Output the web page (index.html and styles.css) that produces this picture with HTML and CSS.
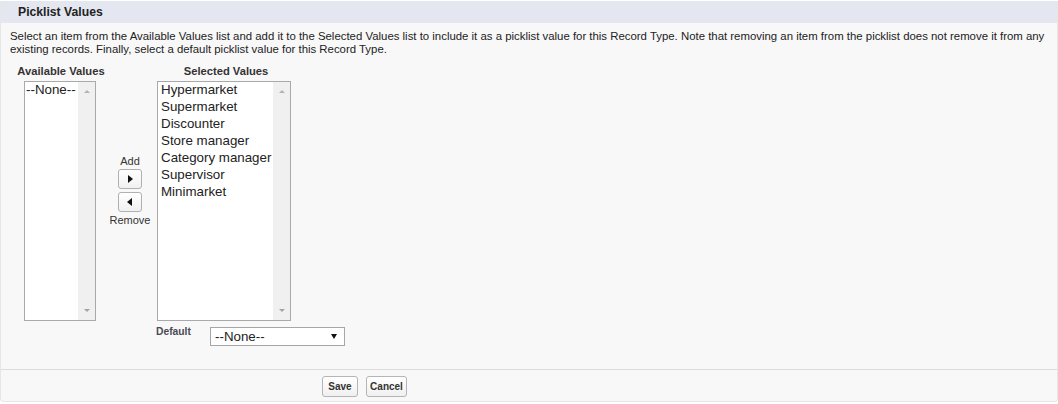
FILE: index.html
```html
<!DOCTYPE html>
<html lang="en">
<head>
<meta charset="utf-8">
<title>Picklist Values</title>
<link rel="stylesheet" href="styles.css">
</head>
<body>
<div class="panel">
  <div class="panel-header"><h3>Picklist Values</h3></div>
  <div class="panel-body">
    <p class="desc">Select an item from the Available Values list and add it to the Selected Values list to include it as a picklist value for this Record Type. Note that removing an item from the picklist does not remove it from any existing records. Finally, select a default picklist value for this Record Type.</p>
    <div class="dueling">
      <div class="col col-avail">
        <div class="col-label">Available Values</div>
        <div class="listbox listbox-avail" role="listbox">
          <div class="list-items">
            <div class="opt">--None--</div>
          </div>
          <div class="scroll"><span class="arr-up"></span><span class="arr-down"></span></div>
        </div>
      </div>
      <div class="col col-btns">
        <div class="col-label">&nbsp;</div>
        <div class="btn-stack">
          <div class="mini-label">Add</div>
          <button class="arrow-btn" type="button" aria-label="Add"><span class="tri-right"></span></button>
          <button class="arrow-btn" type="button" aria-label="Remove"><span class="tri-left"></span></button>
          <div class="mini-label mini-remove">Remove</div>
        </div>
      </div>
      <div class="col col-sel">
        <div class="col-label">Selected Values</div>
        <div class="listbox listbox-sel" role="listbox">
          <div class="list-items">
            <div class="opt">Hypermarket</div>
            <div class="opt">Supermarket</div>
            <div class="opt">Discounter</div>
            <div class="opt">Store manager</div>
            <div class="opt">Category manager</div>
            <div class="opt">Supervisor</div>
            <div class="opt">Minimarket</div>
          </div>
          <div class="scroll"><span class="arr-up"></span><span class="arr-down"></span></div>
        </div>
      </div>
    </div>
    <div class="default-row">
      <span class="default-label">Default</span>
      <div class="fake-select"><span class="sel-text">--None--</span><span class="tri-down"></span></div>
    </div>
  </div>
  <div class="panel-footer">
    <button class="btn btn-save" type="button">Save</button>
    <button class="btn btn-cancel" type="button">Cancel</button>
  </div>
</div>
</body>
</html>
```

FILE: styles.css
```css
html, body {
  margin: 0;
  padding: 0;
  background: #ffffff;
}

body {
  font-family: "Liberation Sans", Arial, sans-serif;
  color: #222;
  padding-top: 1px;
}

.panel {
  background: #f8f8f8;
  border: 1px solid #e6e6e6;
  border-top: none;
  border-radius: 0 0 4px 4px;
  width: 1056px;
}

.panel-header {
  background: #e4e7ef;
  padding: 4px 0 4px 17px;
}

.panel-header h3 {
  margin: 0;
  font-size: 12.2px;
  line-height: 14px;
  font-weight: bold;
  color: #222;
}

.panel-body {
  padding: 7px 9px 23px 9px;
}

.desc {
  margin: 0;
  font-size: 11.4px;
  line-height: 13px;
  color: #222;
}

.dueling {
  display: flex;
  margin-top: 8px;
}

.col {
  display: flex;
  flex-direction: column;
  align-items: center;
}

.col-avail { width: 100px; }
.col-btns { width: 42px; }
.col-sel { width: 144px; }

.col-label {
  font-size: 11.2px;
  font-weight: bold;
  line-height: 14px;
  color: #333;
  margin-bottom: 3px;
  white-space: nowrap;
}

.col-avail .col-label {
  margin-left: 2px;
}

.col-sel .col-label {
  margin-left: 4px;
}

.listbox {
  display: flex;
  height: 238px;
  background: #fff;
  border: 1px solid #a9a9a9;
}

.listbox-avail { width: 70px; }
.listbox-sel { width: 132px; }

.list-items {
  flex: 1;
  margin-top: -1px;
  font-size: 13.33px;
  line-height: 17px;
  color: #222;
  white-space: nowrap;
  overflow: hidden;
}

.listbox-avail .list-items { padding-left: 1px; }
.listbox-sel .list-items { padding-left: 3px; }

.scroll {
  width: 17px;
  background: #f0f0f0;
  display: flex;
  flex-direction: column;
  justify-content: space-between;
  align-items: center;
  padding: 8px 0;
}

.arr-up {
  width: 0;
  height: 0;
  border-left: 3.5px solid transparent;
  border-right: 3.5px solid transparent;
  border-bottom: 3.5px solid #b3b3b3;
}

.arr-down {
  width: 0;
  height: 0;
  border-left: 3.5px solid transparent;
  border-right: 3.5px solid transparent;
  border-top: 3.5px solid #a3a3a3;
}

.btn-stack {
  display: flex;
  flex-direction: column;
  align-items: center;
  padding-top: 74px;
  margin-left: -2px;
}

.mini-label {
  font-size: 11px;
  line-height: 13px;
  color: #333;
  margin-bottom: 1px;
}

.mini-remove {
  margin-top: 2px;
  margin-bottom: 0;
}

.arrow-btn {
  width: 24px;
  height: 20px;
  padding: 0;
  margin: 0 0 3px 0;
  border: 1px solid #b0b0b0;
  border-radius: 3px;
  background: linear-gradient(#ffffff, #f1f1f1);
  display: flex;
  align-items: center;
  justify-content: center;
}

.arrow-btn + .mini-label { margin-top: -1px; }

.tri-right {
  width: 0;
  height: 0;
  border-top: 4px solid transparent;
  border-bottom: 4px solid transparent;
  border-left: 5px solid #111;
  margin-left: 1px;
}

.tri-left {
  width: 0;
  height: 0;
  border-top: 4px solid transparent;
  border-bottom: 4px solid transparent;
  border-right: 5px solid #111;
  margin-right: 1px;
}

.default-row {
  display: flex;
  align-items: flex-start;
  margin-top: 6px;
  padding-left: 146px;
}

.default-label {
  width: 54px;
  font-size: 10.3px;
  font-weight: bold;
  line-height: 12px;
  color: #4a4a56;
  margin-top: -1px;
}

.fake-select {
  height: 17px;
  border: 1px solid #a6a6a6;
  background: #fff;
  display: flex;
  align-items: center;
  justify-content: space-between;
  padding: 0 7px 0 4px;
  box-sizing: content-box;
  width: 122px;
}

.sel-text {
  font-size: 13.33px;
  line-height: 17px;
  color: #222;
}

.tri-down {
  width: 0;
  height: 0;
  border-left: 3px solid transparent;
  border-right: 3px solid transparent;
  border-top: 5px solid #111;
}

.panel-footer {
  border-top: 1px solid #dcdcdc;
  padding: 6px 0 4px 321px;
  display: flex;
  gap: 8px;
}

.btn {
  height: 21px;
  padding: 0;
  border: 1px solid #b5b5b5;
  border-radius: 3px;
  background: linear-gradient(#ffffff, #f0f0f0);
  font-family: "Liberation Sans", Arial, sans-serif;
  font-size: 10px;
  font-weight: bold;
  color: #333;
  line-height: 19px;
  text-align: center;
}

.btn-save { width: 36px; }
.btn-cancel { width: 41px; }
```
